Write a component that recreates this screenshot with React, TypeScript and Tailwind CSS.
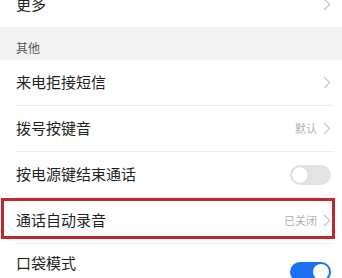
import React from 'react';

const font = { fontFamily: '"Noto Sans CJK SC", "Noto Sans", sans-serif' };

function Chevron() {
  return (
    <svg width="8" height="13" viewBox="0 0 8 13" className="shrink-0">
      <polyline points="1,0.8 6.6,6.5 1,12.2" fill="none" stroke="#c4c4c4" strokeWidth="1.1" />
    </svg>
  );
}

function Toggle({ on }: { on: boolean }) {
  return on ? (
    <div className="flex h-[20px] w-[41px] items-center justify-end rounded-full bg-[#1c6ff3] px-[2px]">
      <div className="h-[16px] w-[16px] rounded-full bg-white" />
    </div>
  ) : (
    <div className="flex h-[20px] w-[41px] items-center rounded-full bg-[#e3e3e3] px-[2px]">
      <div className="h-[16px] w-[16px] rounded-full bg-white shadow-[0_0_1px_rgba(0,0,0,0.25)]" />
    </div>
  );
}

function Row({
  title,
  value,
  chevron,
  toggle,
  divider = true,
  highlight = false,
}: {
  title: string;
  value?: string;
  chevron?: boolean;
  toggle?: 'on' | 'off';
  divider?: boolean;
  highlight?: boolean;
}) {
  return (
    <div className="relative bg-white">
      <div className={`ml-4 mr-2 ${divider ? 'border-b border-[#ececec]' : ''}`}>
        <div className="flex h-[45px] items-center justify-between pr-[3px]">
          <span className="text-[15px] text-[#1f1f1f]">{title}</span>
          <div className="flex items-center gap-[6px]">
            {value && <span className="text-[11px] text-[#b0b0b0]">{value}</span>}
            {chevron && <Chevron />}
            {toggle && <Toggle on={toggle === 'on'} />}
          </div>
        </div>
      </div>
      {highlight && (
        <div className="pointer-events-none absolute left-[1px] top-0 h-[41px] w-[334px] border-[3px] border-[#c5262d]" />
      )}
    </div>
  );
}

export default function App() {
  return (
    <div className="h-[278px] w-[342px] overflow-hidden bg-white" style={font}>
      <div className="-mt-[18px]">
        <Row title="更多" chevron divider={false} />
        <div className="h-[33px] bg-[#f3f3f3] pl-4 pt-[12px] text-[12px] leading-[18px] text-[#555]">其他</div>
        <Row title="来电拒接短信" chevron />
        <Row title="拨号按键音" value="默认" chevron />
        <Row title="按电源键结束通话" toggle="off" />
        <Row title="通话自动录音" value="已关闭" chevron highlight />
        <div className="bg-white">
          <div className="ml-4 mr-2 flex h-[56px] items-center justify-between pr-[3px]">
            <span className="-mt-[18px] text-[15px] text-[#1f1f1f]">口袋模式</span>
            <Toggle on />
          </div>
        </div>
      </div>
    </div>
  );
}
